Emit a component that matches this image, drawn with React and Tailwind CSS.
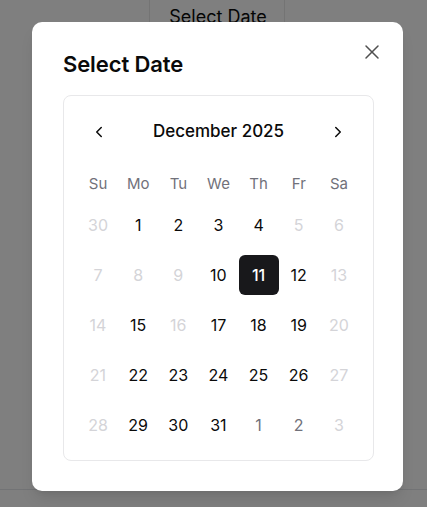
import React from "react";

const weeks = [
  [["30", "d"], ["1", "n"], ["2", "n"], ["3", "n"], ["4", "n"], ["5", "d"], ["6", "d"]],
  [["7", "d"], ["8", "d"], ["9", "d"], ["10", "n"], ["11", "s"], ["12", "n"], ["13", "d"]],
  [["14", "d"], ["15", "n"], ["16", "d"], ["17", "n"], ["18", "n"], ["19", "n"], ["20", "d"]],
  [["21", "d"], ["22", "n"], ["23", "n"], ["24", "n"], ["25", "n"], ["26", "n"], ["27", "d"]],
  [["28", "d"], ["29", "n"], ["30", "n"], ["31", "n"], ["1", "o"], ["2", "o"], ["3", "d"]],
];

const dayCls = {
  d: "text-[#d4d4d8]",
  n: "text-[#0a0a0a]",
  o: "text-[#71717a]",
  s: "bg-[#18181b] text-white font-medium rounded-md",
};

export default function App() {
  return (
    <div className="relative h-[507px] w-full overflow-hidden bg-white" style={{ fontFamily: "Inter, 'Noto Sans', sans-serif" }}>
      {/* page behind */}
      <div className="flex h-[490px] flex-col border-b border-[#e5e7eb]">
        <div className="flex justify-center">
          <div className="ml-[6px] flex h-[60px] w-[136px] justify-center border-x border-[#e8e8e8] pl-[3px] pt-[3px] text-[18px] leading-[28px] text-[#0a0a0a]">
            Select Date
          </div>
        </div>
      </div>
      {/* overlay */}
      <div className="absolute inset-0 bg-black/50" />
      {/* modal */}
      <div className="absolute left-[32px] top-[22px] h-[469px] w-[371px] rounded-[10px] bg-white pl-[31px] pr-[29px] pt-[28px] shadow-lg">
        <h2 className="text-[22px] font-semibold leading-[28px] tracking-[-0.1px] text-[#0a0a0a]">Select Date</h2>
        <button className="absolute right-[19px] top-[18px] text-[#505050]">
          <svg width="24" height="24" viewBox="0 0 24 24" fill="none" stroke="currentColor" strokeWidth="1.5" strokeLinecap="round" strokeLinejoin="round">
            <path d="M18 6 6 18" />
            <path d="m6 6 12 12" />
          </svg>
        </button>
        <div className="mt-[17px] rounded-lg border border-[#e8e8ea] px-[14px] pt-[16px] pb-[15px]">
          <div className="flex h-[40px] items-center justify-between px-[12px]">
            <svg width="18" height="18" viewBox="0 0 24 24" fill="none" stroke="#0a0a0a" strokeWidth="2" strokeLinecap="round" strokeLinejoin="round">
              <path d="m15 18-6-6 6-6" />
            </svg>
            <div className="text-[17px] font-medium text-[#0a0a0a]">December 2025</div>
            <svg width="18" height="18" viewBox="0 0 24 24" fill="none" stroke="#0a0a0a" strokeWidth="2" strokeLinecap="round" strokeLinejoin="round">
              <path d="m9 18 6-6-6-6" />
            </svg>
          </div>
          <div className="mt-[22px] grid grid-cols-7 text-[15px] leading-[20px] text-[#71717a]">
            {["Su", "Mo", "Tu", "We", "Th", "Fr", "Sa"].map((d) => (
              <div key={d} className="text-center">{d}</div>
            ))}
          </div>
          <div className="mt-[11px] flex flex-col gap-[10px]">
            {weeks.map((w, i) => (
              <div key={i} className="grid grid-cols-7">
                {w.map(([n, t], j) => (
                  <div key={j} className={`flex h-[40px] w-[40px] items-center justify-center text-[16px] ${dayCls[t]}`}>
                    {n}
                  </div>
                ))}
              </div>
            ))}
          </div>
        </div>
      </div>
    </div>
  );
}
